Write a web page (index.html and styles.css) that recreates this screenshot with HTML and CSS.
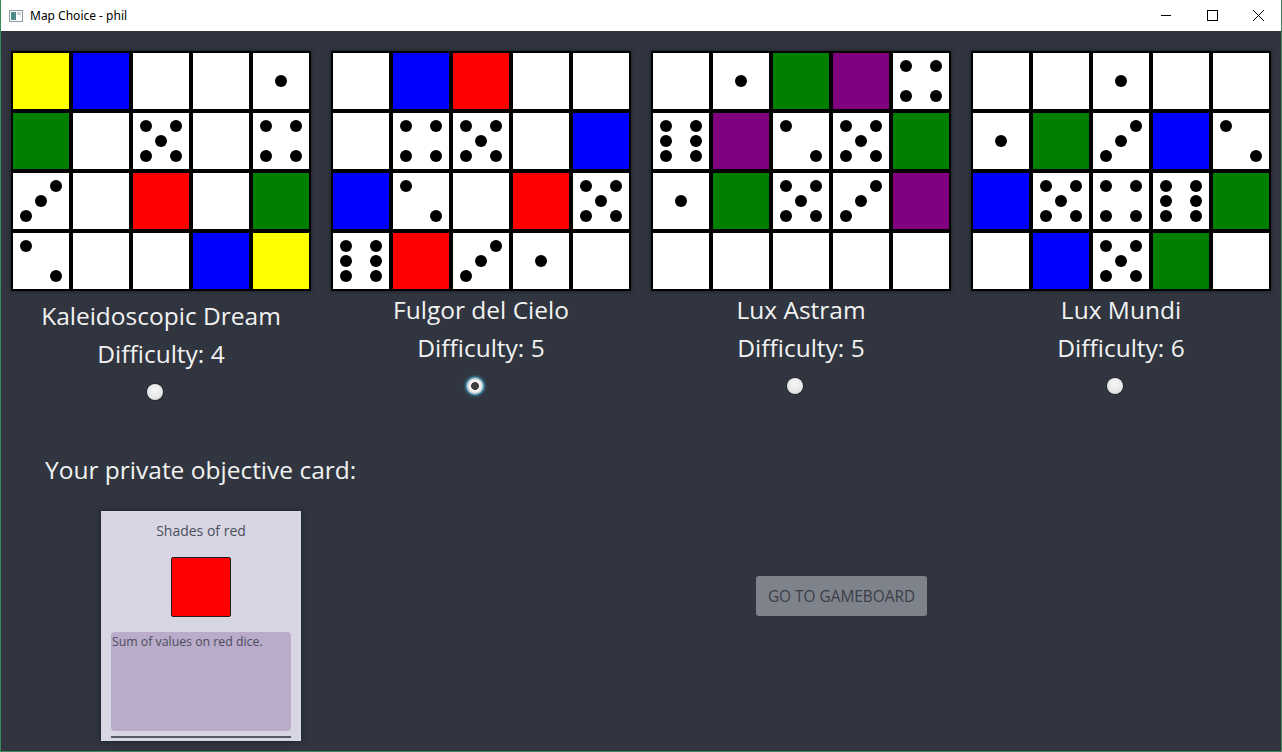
FILE: index.html
```html
<!DOCTYPE html>
<html lang="en">
<head>
<meta charset="utf-8">
<title>Map Choice - phil</title>
<link rel="stylesheet" href="styles.css">
</head>
<body>
<div class="window">
  <header class="titlebar">
    <svg class="app-icon" width="16" height="16" viewBox="0 0 16 16">
      <rect x="1.5" y="2.5" width="13" height="11" fill="#fff" stroke="#8a9aa0"/>
      <rect x="3" y="4" width="5" height="8" fill="#4f8a86"/>
      <rect x="9" y="4" width="4" height="3" fill="#c8d4d8"/>
    </svg>
    <span class="title">Map Choice - phil</span>
    <div class="controls">
      <svg width="46" height="30" viewBox="0 0 46 30"><line x1="18" y1="15.5" x2="28" y2="15.5" stroke="#000" stroke-width="1"/></svg>
      <svg width="46" height="30" viewBox="0 0 46 30"><rect x="18.5" y="10.5" width="10" height="10" fill="none" stroke="#000" stroke-width="1"/></svg>
      <svg width="46" height="30" viewBox="0 0 46 30"><path d="M18 10 L29 21 M29 10 L18 21" stroke="#000" stroke-width="1"/></svg>
    </div>
  </header>

  <main class="content">
    <section class="maps">
      <div class="map map-first">
        <div class="board">
          <div class="cell c-yellow"></div><div class="cell c-blue"></div><div class="cell"></div><div class="cell"></div><div class="cell die"><i class="p-c"></i></div>
          <div class="cell c-green"></div><div class="cell"></div><div class="cell die"><i class="p-tl"></i><i class="p-tr"></i><i class="p-c"></i><i class="p-bl"></i><i class="p-br"></i></div><div class="cell"></div><div class="cell die"><i class="p-tl"></i><i class="p-tr"></i><i class="p-bl"></i><i class="p-br"></i></div>
          <div class="cell die"><i class="p-tr"></i><i class="p-c"></i><i class="p-bl"></i></div><div class="cell"></div><div class="cell c-red"></div><div class="cell"></div><div class="cell c-green"></div>
          <div class="cell die"><i class="p-tl"></i><i class="p-br"></i></div><div class="cell"></div><div class="cell"></div><div class="cell c-blue"></div><div class="cell c-yellow"></div>
        </div>
        <div class="map-name">Kaleidoscopic Dream</div>
        <div class="map-diff">Difficulty: 4</div>
        <div class="map-pick"><input class="radio" type="radio" name="map"></div>
      </div>

      <div class="map">
        <div class="board">
          <div class="cell"></div><div class="cell c-blue"></div><div class="cell c-red"></div><div class="cell"></div><div class="cell"></div>
          <div class="cell"></div><div class="cell die"><i class="p-tl"></i><i class="p-tr"></i><i class="p-bl"></i><i class="p-br"></i></div><div class="cell die"><i class="p-tl"></i><i class="p-tr"></i><i class="p-c"></i><i class="p-bl"></i><i class="p-br"></i></div><div class="cell"></div><div class="cell c-blue"></div>
          <div class="cell c-blue"></div><div class="cell die"><i class="p-tl"></i><i class="p-br"></i></div><div class="cell"></div><div class="cell c-red"></div><div class="cell die"><i class="p-tl"></i><i class="p-tr"></i><i class="p-c"></i><i class="p-bl"></i><i class="p-br"></i></div>
          <div class="cell die"><i class="p-tl"></i><i class="p-ml"></i><i class="p-bl"></i><i class="p-tr"></i><i class="p-mr"></i><i class="p-br"></i></div><div class="cell c-red"></div><div class="cell die"><i class="p-tr"></i><i class="p-c"></i><i class="p-bl"></i></div><div class="cell die"><i class="p-c"></i></div><div class="cell"></div>
        </div>
        <div class="map-name">Fulgor del Cielo</div>
        <div class="map-diff">Difficulty: 5</div>
        <div class="map-pick"><input class="radio" type="radio" name="map" checked></div>
      </div>

      <div class="map">
        <div class="board">
          <div class="cell"></div><div class="cell die"><i class="p-c"></i></div><div class="cell c-green"></div><div class="cell c-purple"></div><div class="cell die"><i class="p-tl"></i><i class="p-tr"></i><i class="p-bl"></i><i class="p-br"></i></div>
          <div class="cell die"><i class="p-tl"></i><i class="p-ml"></i><i class="p-bl"></i><i class="p-tr"></i><i class="p-mr"></i><i class="p-br"></i></div><div class="cell c-purple"></div><div class="cell die"><i class="p-tl"></i><i class="p-br"></i></div><div class="cell die"><i class="p-tl"></i><i class="p-tr"></i><i class="p-c"></i><i class="p-bl"></i><i class="p-br"></i></div><div class="cell c-green"></div>
          <div class="cell die"><i class="p-c"></i></div><div class="cell c-green"></div><div class="cell die"><i class="p-tl"></i><i class="p-tr"></i><i class="p-c"></i><i class="p-bl"></i><i class="p-br"></i></div><div class="cell die"><i class="p-tr"></i><i class="p-c"></i><i class="p-bl"></i></div><div class="cell c-purple"></div>
          <div class="cell"></div><div class="cell"></div><div class="cell"></div><div class="cell"></div><div class="cell"></div>
        </div>
        <div class="map-name">Lux Astram</div>
        <div class="map-diff">Difficulty: 5</div>
        <div class="map-pick"><input class="radio" type="radio" name="map"></div>
      </div>

      <div class="map">
        <div class="board">
          <div class="cell"></div><div class="cell"></div><div class="cell die"><i class="p-c"></i></div><div class="cell"></div><div class="cell"></div>
          <div class="cell die"><i class="p-c"></i></div><div class="cell c-green"></div><div class="cell die"><i class="p-tr"></i><i class="p-c"></i><i class="p-bl"></i></div><div class="cell c-blue"></div><div class="cell die"><i class="p-tl"></i><i class="p-br"></i></div>
          <div class="cell c-blue"></div><div class="cell die"><i class="p-tl"></i><i class="p-tr"></i><i class="p-c"></i><i class="p-bl"></i><i class="p-br"></i></div><div class="cell die"><i class="p-tl"></i><i class="p-tr"></i><i class="p-bl"></i><i class="p-br"></i></div><div class="cell die"><i class="p-tl"></i><i class="p-ml"></i><i class="p-bl"></i><i class="p-tr"></i><i class="p-mr"></i><i class="p-br"></i></div><div class="cell c-green"></div>
          <div class="cell"></div><div class="cell c-blue"></div><div class="cell die"><i class="p-tl"></i><i class="p-tr"></i><i class="p-c"></i><i class="p-bl"></i><i class="p-br"></i></div><div class="cell c-green"></div><div class="cell"></div>
        </div>
        <div class="map-name">Lux Mundi</div>
        <div class="map-diff">Difficulty: 6</div>
        <div class="map-pick"><input class="radio" type="radio" name="map"></div>
      </div>
    </section>

    <section class="bottom">
      <div class="objective">
        <h2 class="objective-label">Your private objective card:</h2>
        <div class="card">
          <div class="card-title">Shades of red</div>
          <div class="card-swatch"></div>
          <div class="card-desc">Sum of values on red dice.</div>
          <div class="card-rule"></div>
        </div>
      </div>
      <div class="actions">
        <button class="go-btn" type="button">GO TO GAMEBOARD</button>
      </div>
    </section>
  </main>
</div>
</body>
</html>
```

FILE: styles.css
```css
* { box-sizing: border-box; }
html, body { margin: 0; padding: 0; }
body {
  width: 1282px;
  height: 752px;
  overflow: hidden;
  font-family: "Open Sans", "Noto Sans", sans-serif;
  background: #30353f;
}
.window {
  width: 1282px;
  height: 752px;
  border: 1px solid #3a8a5c;
  border-top: none;
  display: flex;
  flex-direction: column;
  overflow: hidden;
}
.titlebar {
  height: 31px;
  flex: 0 0 31px;
  background: #ffffff;
  display: flex;
  align-items: center;
  padding-left: 7px;
}
.app-icon { display: block; }
.title {
  margin-left: 6px;
  font-size: 12px;
  color: #000;
  font-family: "Noto Sans", "Open Sans", sans-serif;
}
.controls {
  margin-left: auto;
  display: flex;
  height: 30px;
  margin-top: -1px;
}
.controls svg { display: block; }

.content {
  flex: 1;
  background: #30353f;
  color: #f2f2f2;
}
.maps {
  display: flex;
  padding-top: 20px;
}
.map {
  width: 320px;
  padding-left: 10px;
  padding-right: 10px;
  display: flex;
  flex-direction: column;
  align-items: center;
}
.board {
  display: grid;
  grid-template-columns: repeat(5, 56px);
  grid-auto-rows: 56px;
  gap: 4px;
  padding: 2px;
  background: #000;
  box-shadow: 0 0 4px rgba(0,0,0,0.5);
}
.cell { background: #fff; }
.c-yellow { background: #ffff00; }
.c-blue { background: #0000ff; }
.c-red { background: #ff0000; }
.c-green { background: #008000; }
.c-purple { background: #800080; }
.die {
  display: grid;
  grid-template-columns: repeat(3, 12px);
  grid-template-rows: repeat(3, 12px);
  gap: 3px;
  padding: 7px;
}
.die i {
  display: block;
  width: 12px;
  height: 12px;
  border-radius: 50%;
  background: #000;
}
.p-tl { grid-area: 1 / 1; }
.p-tr { grid-area: 1 / 3; }
.p-ml { grid-area: 2 / 1; }
.p-mr { grid-area: 2 / 3; }
.p-c  { grid-area: 2 / 2; }
.p-bl { grid-area: 3 / 1; }
.p-br { grid-area: 3 / 3; }

.map-name, .map-diff {
  font-size: 24.5px;
  line-height: 38px;
  height: 38px;
  white-space: nowrap;
}
.map-first .map-name { margin-top: 6px; }
.map-pick {
  height: 38px;
  display: flex;
  align-items: center;
  justify-content: center;
  padding-right: 12px;
}
.radio {
  appearance: none;
  -webkit-appearance: none;
  margin: 0;
  width: 16px;
  height: 16px;
  border-radius: 50%;
  background: radial-gradient(circle at 50% 40%, #f6f6f6 0%, #e6e6e6 60%, #cfcfcf 100%);
  box-shadow: 0 0 0 1px rgba(0,0,0,0.25);
}
.radio:checked {
  background: radial-gradient(circle, #3c3c3c 0 3.6px, #f2f2f2 4.2px 6px, #d6d6d6 7px);
  box-shadow: 0 0 0 1px #4fb4dc, 0 0 3px 2px rgba(79,180,220,0.6);
}

.bottom {
  display: flex;
  align-items: flex-start;
  padding-left: 44px;
  margin-top: 43px;
}
.objective { width: 711px; }
.objective-label {
  margin: 0;
  font-weight: normal;
  font-size: 24.5px;
  line-height: 32px;
  color: #f2f2f2;
}
.card {
  margin-top: 25px;
  margin-left: 56px;
  width: 200px;
  height: 230px;
  background: #d8d6e2;
  display: flex;
  flex-direction: column;
  align-items: center;
  padding: 10px 10px 0;
  box-shadow: 0 0 6px rgba(0,0,0,0.45);
}
.card-title {
  font-size: 14px;
  line-height: 20px;
  color: #4b4e5c;
}
.card-swatch {
  margin-top: 16px;
  width: 60px;
  height: 60px;
  background: #ff0000;
  border: 1px solid #2a1a1a;
  border-radius: 2px;
}
.card-desc {
  margin-top: 15px;
  width: 180px;
  height: 99px;
  background: #b9abc9;
  border-radius: 4px;
  font-size: 12.3px;
  line-height: 16px;
  color: #4b4e5c;
  padding: 2px 1px;
}
.card-rule {
  margin-top: 5px;
  width: 180px;
  height: 2px;
  background: #555a66;
}
.actions { padding-top: 122px; }
.go-btn {
  width: 171px;
  height: 40px;
  border: none;
  border-radius: 3px;
  background: #7e828b;
  color: #3a3e48;
  font-family: "Open Sans", "Noto Sans", sans-serif;
  font-size: 15.4px;
  padding: 0;
}
```
